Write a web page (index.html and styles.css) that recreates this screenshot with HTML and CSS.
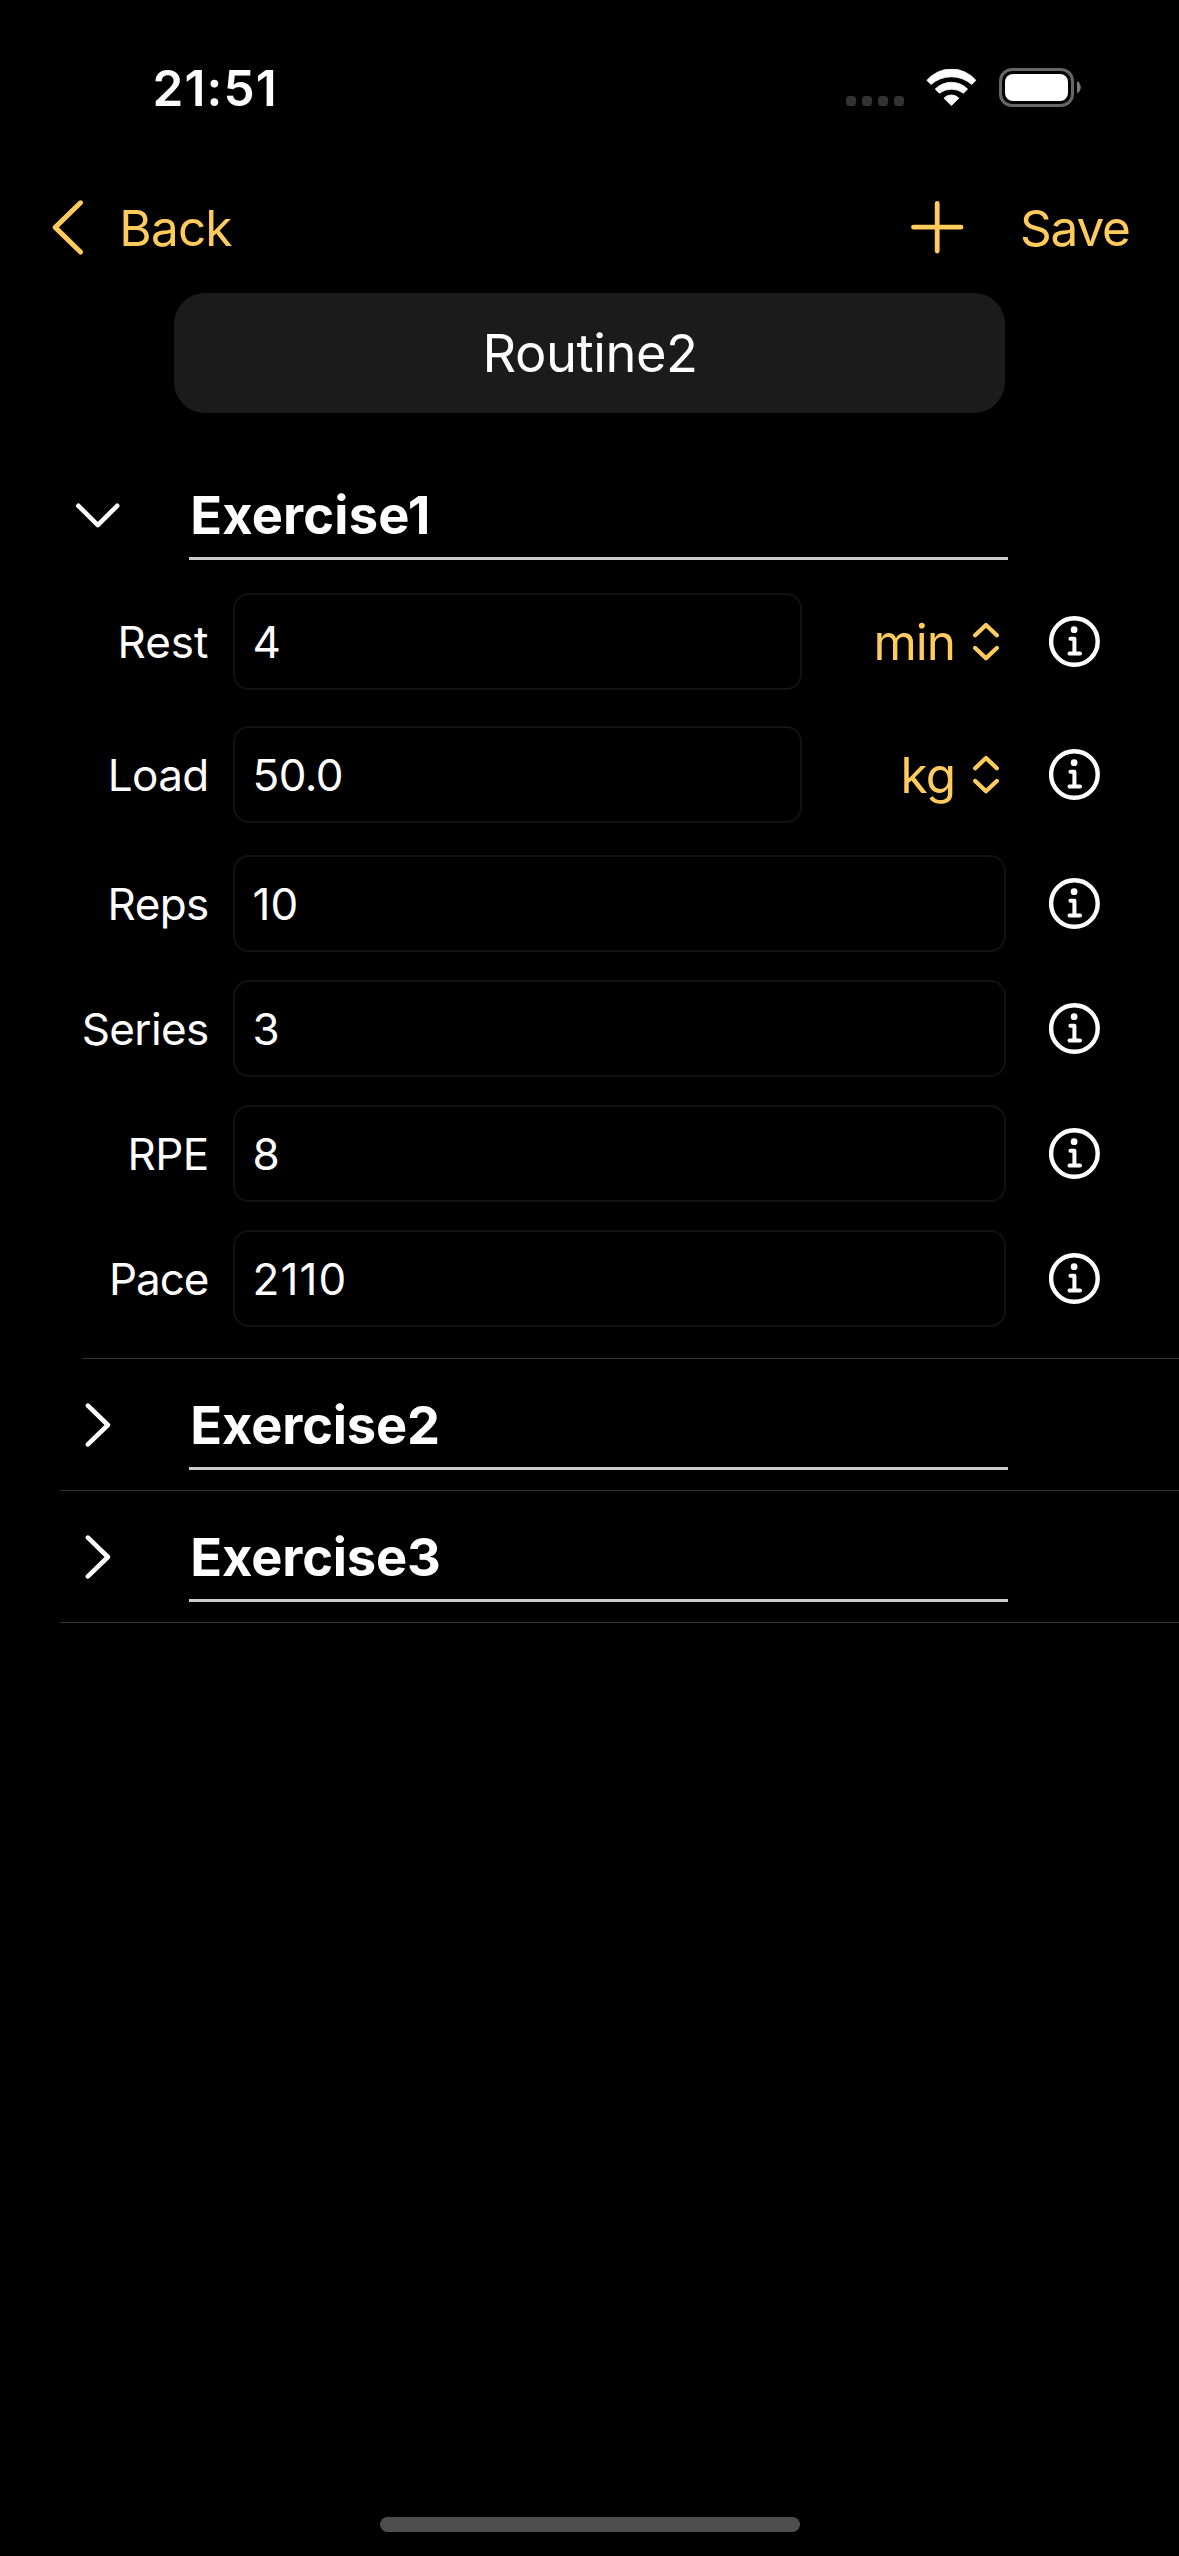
FILE: index.html
```html
<!DOCTYPE html>
<html lang="en">
<head>
<meta charset="utf-8">
<title>Routine2</title>
<link rel="stylesheet" href="styles.css">
</head>
<body>
<svg class="defs" aria-hidden="true">
  <symbol id="info" viewBox="0 0 51 51">
    <circle cx="25.4" cy="25.5" r="23.3" fill="none" stroke="currentColor" stroke-width="4.4"/>
    <circle cx="25.1" cy="13.7" r="3.4" fill="currentColor"/>
    <path d="M21.4 22.8H25.4V37.4M20.5 37.4H31" fill="none" stroke="currentColor" stroke-width="4" stroke-linecap="round" stroke-linejoin="round"/>
  </symbol>
  <symbol id="updown" viewBox="0 0 26 39">
    <path d="M2.2 13.2L13 3L23.8 13.2M2.2 26L13 36.2L23.8 26" fill="none" stroke="currentColor" stroke-width="4.3" stroke-linecap="round" stroke-linejoin="round"/>
  </symbol>
  <symbol id="chevron-right" viewBox="0 0 26 44">
    <path d="M2.9 2.6L22.9 22L2.9 41.4" fill="none" stroke="currentColor" stroke-width="4.6" stroke-linecap="round" stroke-linejoin="round"/>
  </symbol>
</svg>

<header class="status">
  <span class="time">21:51</span>
  <div class="indicators">
    <div class="signal"><i></i><i></i><i></i><i></i></div>
    <svg class="wifi" viewBox="0 0 51 39">
      <g fill="#fff" stroke="#fff" stroke-width=".8" stroke-linejoin="round">
        <path d="M.9 11.3A32.2 32.2 0 0 1 49.9 11.3L45.8 15.5A30.9 30.9 0 0 0 5 15.5Z"/>
        <path d="M9.2 20.1A22.7 22.7 0 0 1 41.6 20.1L37.4 24.2A19.9 19.9 0 0 0 13.4 24.2Z"/>
        <path d="M18 29.2A10 10 0 0 1 32.8 29.2L25.4 36.6Z"/>
      </g>
    </svg>
    <svg class="battery" viewBox="0 0 82 40">
      <rect x="1.5" y="1.5" width="72" height="36" rx="11.5" fill="none" stroke="#666" stroke-width="3"/>
      <rect x="6" y="6" width="63" height="27" rx="8" fill="#fff"/>
      <path d="M78 13.2C83 15.4 83 23.2 78 25.4Z" fill="#7a7a7a"/>
    </svg>
  </div>
</header>

<nav class="nav">
  <a class="back">
    <svg class="back-icon" viewBox="0 0 31 56"><path d="M28.5 2.8L3.2 27.4L28.5 52" fill="none" stroke="currentColor" stroke-width="5" stroke-linecap="round" stroke-linejoin="round"/></svg>
    <span class="back-text">Back</span>
  </a>
  <a class="add"><svg class="add-icon" viewBox="0 0 53 56"><path d="M26.2 3.5V51M2.5 27.2H50" fill="none" stroke="currentColor" stroke-width="4.8" stroke-linecap="round"/></svg></a>
  <a class="save">Save</a>
</nav>

<h1 class="routine-name">Routine2</h1>

<main class="list">
  <section class="exercise">
    <div class="exercise-head">
      <svg class="chevron-down" viewBox="0 0 44 26"><path d="M2.4 3.8L21.8 23.1L41.2 3.8" fill="none" stroke="currentColor" stroke-width="4.6" stroke-linecap="round" stroke-linejoin="round"/></svg>
      <h2 class="exercise-name exercise-name-open">Exercise1</h2>
    </div>
    <div class="rows">
      <div class="row row-unit">
        <span class="label label-rest">Rest</span>
        <div class="control"><div class="field">4</div><div class="unit">min<svg class="updown"><use href="#updown"/></svg></div></div>
        <svg class="info"><use href="#info"/></svg>
      </div>
      <div class="row row-unit row-load">
        <span class="label">Load</span>
        <div class="control"><div class="field field-load">50.0</div><div class="unit">kg<svg class="updown"><use href="#updown"/></svg></div></div>
        <svg class="info"><use href="#info"/></svg>
      </div>
      <div class="row">
        <span class="label">Reps</span>
        <div class="control"><div class="field">10</div></div>
        <svg class="info"><use href="#info"/></svg>
      </div>
      <div class="row">
        <span class="label">Series</span>
        <div class="control"><div class="field">3</div></div>
        <svg class="info"><use href="#info"/></svg>
      </div>
      <div class="row">
        <span class="label">RPE</span>
        <div class="control"><div class="field">8</div></div>
        <svg class="info"><use href="#info"/></svg>
      </div>
      <div class="row">
        <span class="label label-pace">Pace</span>
        <div class="control"><div class="field field-pace">2110</div></div>
        <svg class="info"><use href="#info"/></svg>
      </div>
    </div>
    <hr class="separator separator-inset">
  </section>
  <section class="exercise">
    <div class="exercise-head">
      <svg class="chevron-right"><use href="#chevron-right"/></svg>
      <h2 class="exercise-name">Exercise2</h2>
    </div>
    <hr class="separator">
  </section>
  <section class="exercise">
    <div class="exercise-head">
      <svg class="chevron-right"><use href="#chevron-right"/></svg>
      <h2 class="exercise-name">Exercise3</h2>
    </div>
    <hr class="separator">
  </section>
</main>

<div class="home-indicator"></div>
</body>
</html>
```
FILE: styles.css
```css
* {
  box-sizing: border-box;
}

body {
  margin: 0;
  min-height: 2556px;
  display: flex;
  flex-direction: column;
  background: #000;
  color: #fff;
  font-family: Inter, "Liberation Sans", sans-serif;
}

svg {
  display: block;
  flex: none;
}

.defs {
  display: none;
}

/* Status bar */
.status {
  height: 176px;
  padding: 0 98px 0 152.6px;
  display: flex;
  align-items: center;
  justify-content: space-between;
}

.time {
  font-size: 49.5px;
  font-weight: 600;
  letter-spacing: 1.1px;
}

.indicators {
  display: flex;
  align-items: flex-end;
}

.signal {
  display: flex;
  gap: 6px;
  margin: 0 22px 2px 0;
}

.signal i {
  width: 10px;
  height: 10px;
  border-radius: 3.5px;
  background: #333;
}

.wifi {
  width: 51px;
  height: 39px;
  margin-right: 22px;
}

.battery {
  width: 82px;
  height: 40px;
}

/* Navigation bar */
.nav {
  height: 104px;
  padding: 0 48px 0 52px;
  display: flex;
  align-items: center;
  color: #ffcb5c;
  font-size: 49.5px;
}

.back {
  display: flex;
  align-items: center;
  margin-right: auto;
}

.back-icon {
  width: 31px;
  height: 56px;
  margin-right: 36.3px;
}

.back-text {
  letter-spacing: -0.8px;
}

.add-icon {
  width: 53px;
  height: 56px;
}

.save {
  width: 111px;
  margin-left: 56px;
  letter-spacing: -1.2px;
  white-space: nowrap;
}

.routine-name {
  width: 831px;
  height: 120px;
  margin: 13px auto 36px;
  padding-left: 1px;
  display: flex;
  align-items: center;
  justify-content: center;
  border-radius: 31px;
  background: #1b1b1b;
  font-size: 52.4px;
  font-weight: 400;
  letter-spacing: -0.45px;
}

/* Exercises */
.exercise-head {
  display: grid;
  grid-template-columns: 76px 819px;
  column-gap: 53px;
  align-items: center;
  justify-items: center;
  padding: 21px 0 20px 60px;
}

.chevron-down {
  width: 44px;
  height: 26px;
}

.chevron-right {
  width: 26px;
  height: 44px;
}

.exercise-name {
  width: 100%;
  height: 90px;
  margin: 0;
  padding: 3px 0 0 1.3px;
  border-bottom: 3px solid #ccc;
  font-size: 52.4px;
  font-weight: 700;
  line-height: 84px;
  letter-spacing: -0.15px;
}

.exercise-name-open {
  letter-spacing: 0.15px;
}

.rows {
  display: flex;
  flex-direction: column;
  gap: 28px;
  padding: 13px 0 31px;
}

.row {
  display: flex;
  align-items: center;
  font-size: 44px;
}

.row-unit {
  margin-bottom: 8px;
}

.row-load {
  margin-bottom: 4px;
}

.label {
  width: 208.5px;
  height: 97px;
  margin-right: 24.5px;
  line-height: 98px;
  text-align: right;
  letter-spacing: -0.65px;
}

.label-rest {
  letter-spacing: 0;
}

.label-pace {
  letter-spacing: -1px;
}

.control {
  width: 773px;
  margin-right: 43px;
  display: flex;
  align-items: center;
}

.field {
  flex: 1;
  height: 97px;
  padding-left: 17.5px;
  border: 2px solid #121212;
  border-radius: 16px;
  line-height: 94px;
}

.field-load {
  letter-spacing: -0.6px;
}

.field-pace {
  letter-spacing: 1.1px;
}

.unit {
  width: 204px;
  padding-right: 7px;
  display: flex;
  align-items: center;
  justify-content: flex-end;
  gap: 18px;
  color: #ffcb5c;
  font-size: 49.5px;
  letter-spacing: -1px;
}

.updown {
  width: 26px;
  height: 39px;
}

.info {
  width: 51px;
  height: 51px;
}

.separator {
  height: 1px;
  margin: 0 0 0 60px;
  border: 0;
  background: #333336;
}

.separator-inset {
  margin-left: 82px;
}

.home-indicator {
  width: 420px;
  height: 15px;
  margin: auto auto 24px 380px;
  border-radius: 8px;
  background: #4d4d4d;
}
```
